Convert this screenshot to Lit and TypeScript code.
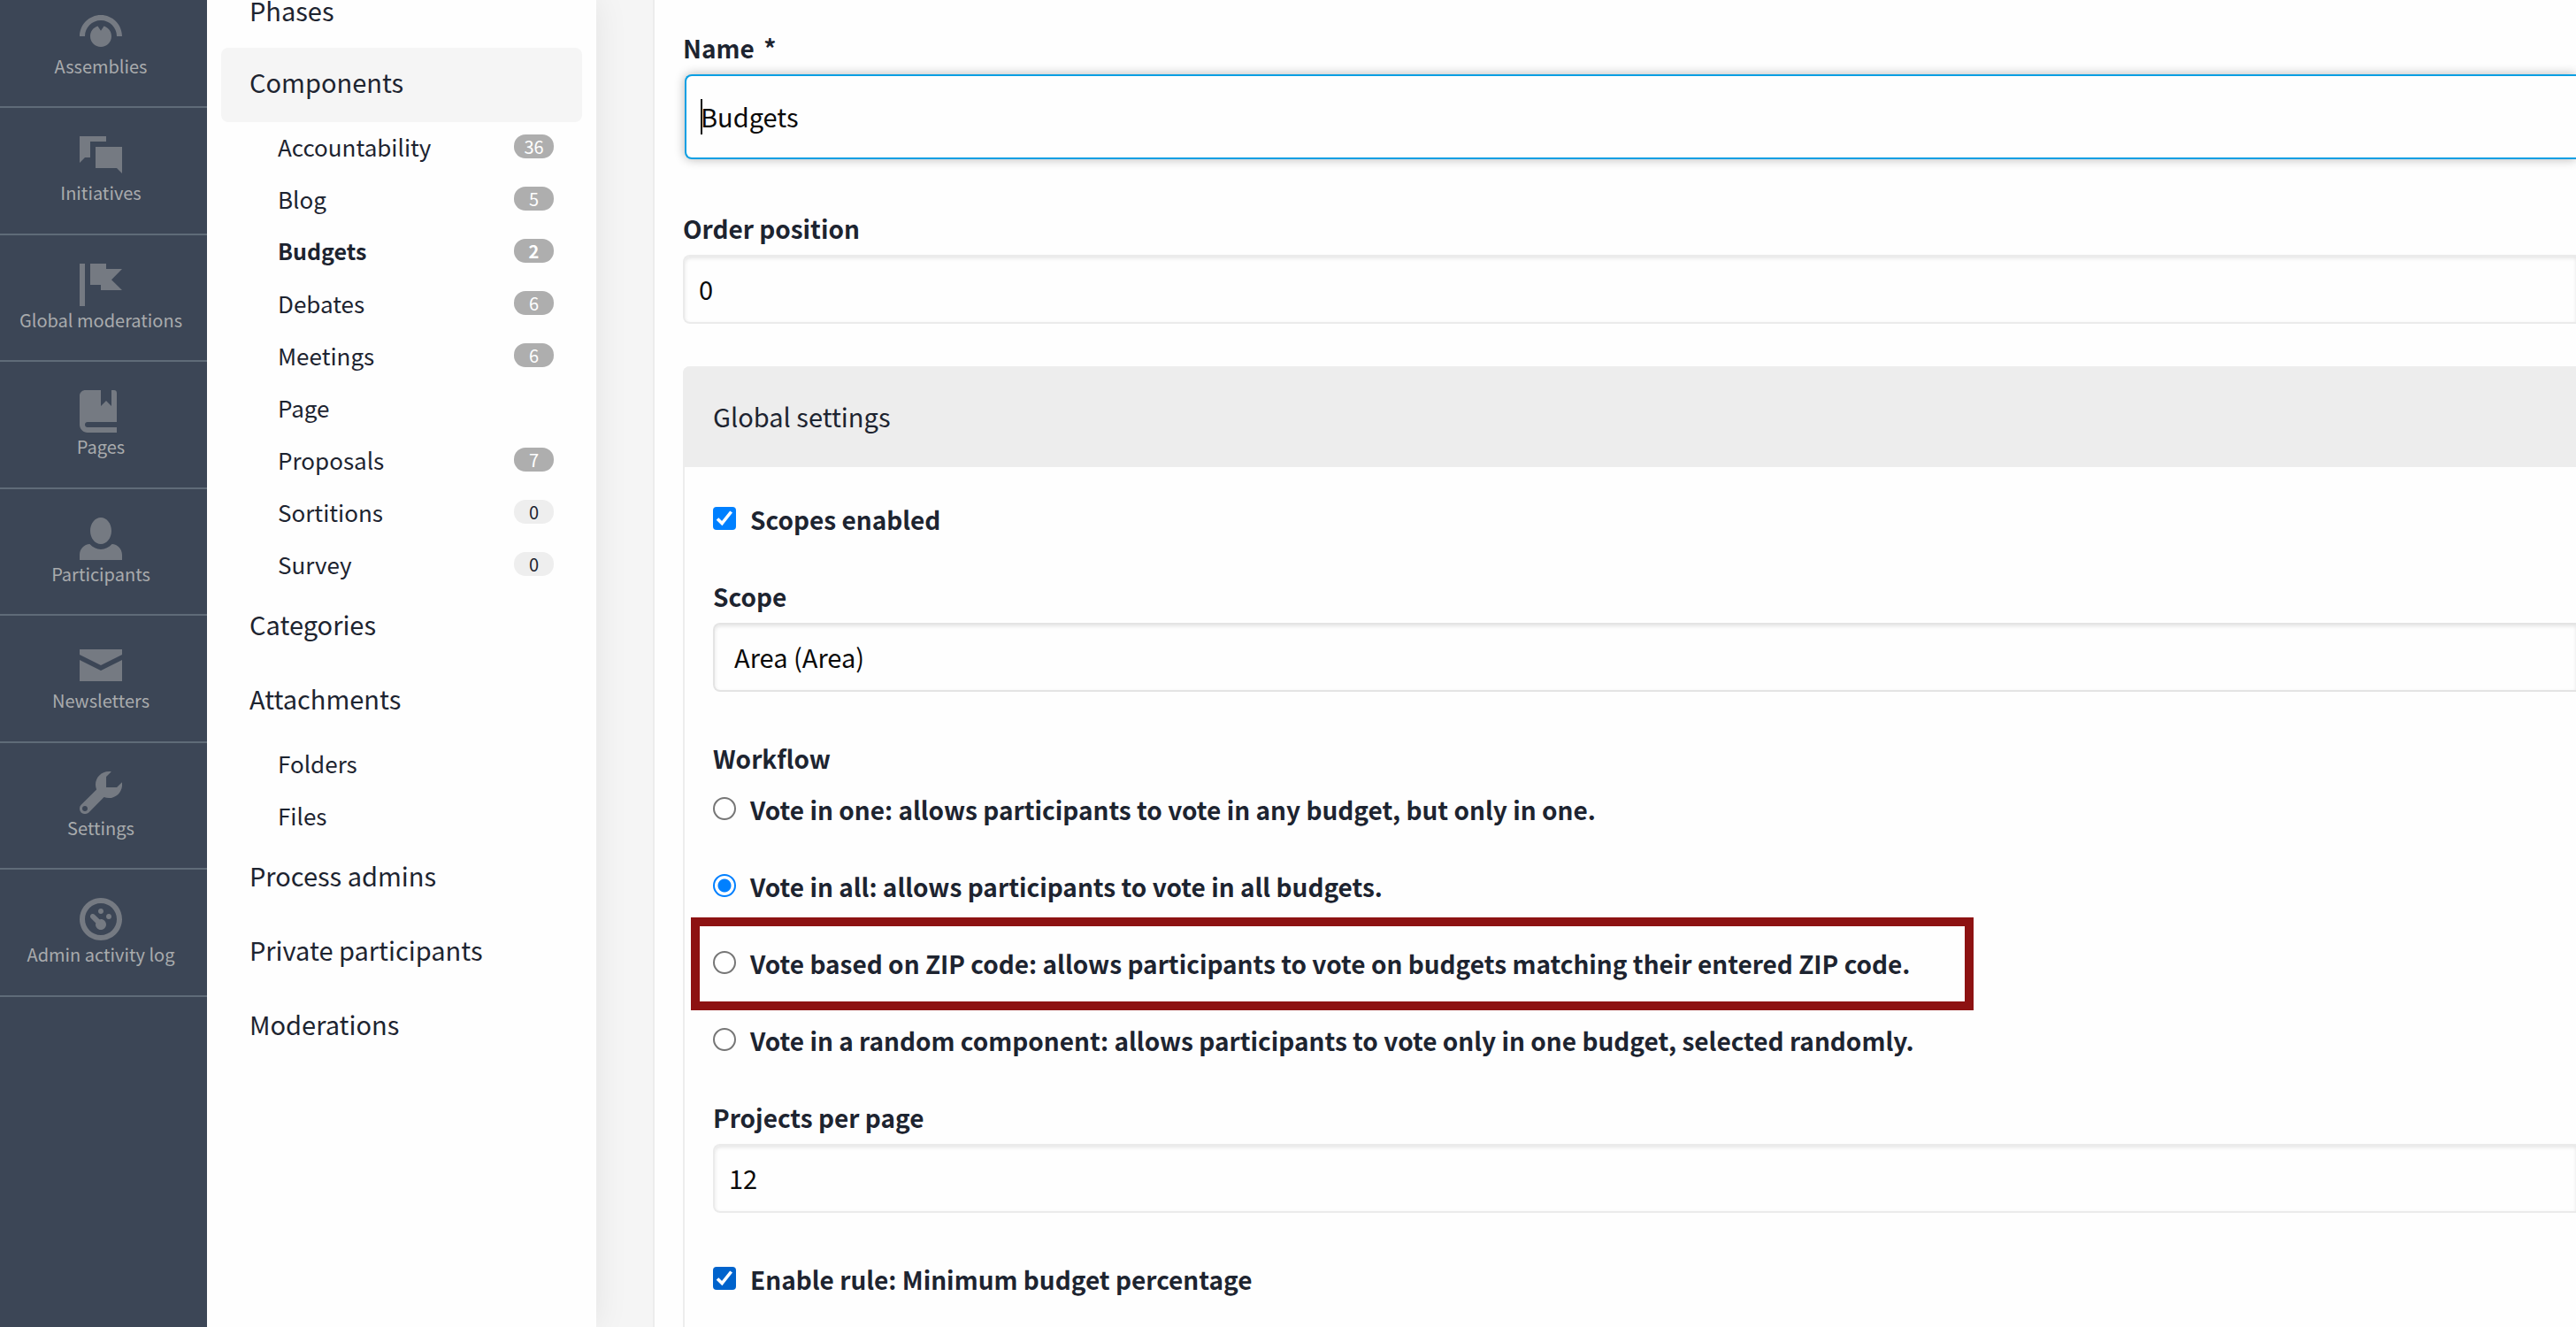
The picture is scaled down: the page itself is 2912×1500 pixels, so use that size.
import { LitElement, html, css, svg, nothing } from "lit";
import { customElement } from "lit/decorators.js";
import { classMap } from "lit/directives/class-map.js";

interface NavEntry {
  label: string;
  path: string;
  shift?: boolean;
}

interface SubItem {
  label: string;
  count?: number;
  current?: boolean;
}

interface MenuItem {
  label: string;
  active?: boolean;
  children?: SubItem[];
}

const NAV: NavEntry[] = [
  {
    label: "Assemblies",
    shift: true,
    path: "M4 0c-2.2 0-4 1.8-4 4h1c0-1.66 1.34-3 3-3s3 1.34 3 3h1c0-2.2-1.8-4-4-4zm-.59 2.09c-.81.25-1.41 1.01-1.41 1.91 0 1.11.9 2 2 2 1.11 0 2-.89 2-2 0-.9-.59-1.65-1.41-1.91l-.59.88-.59-.88z",
  },
  { label: "Initiatives", path: "M0 0v5l1-1h1v-3h3v-1h-5zm3 2v4h4l1 1v-5h-5z" },
  { label: "Global moderations", path: "M0 0v8h1v-8h-1zm2 0v4h2v1h4l-2-1.97 2-2.03h-3v-1h-3z" },
  {
    label: "Pages",
    path: "M1 0c-.07 0-.13.01-.19.03-.39.08-.7.39-.78.78-.03.06-.03.12-.03.19v5.5c0 .83.67 1.5 1.5 1.5h5.5v-1h-5.5c-.28 0-.5-.22-.5-.5s.22-.5.5-.5h5.5v-5.5c0-.28-.22-.5-.5-.5h-.5v3l-1-1-1 1v-3h-3z",
  },
  {
    label: "Participants",
    path: "M4 0c-1.1 0-2 1.12-2 2.5s.9 2.5 2 2.5 2-1.12 2-2.5-.9-2.5-2-2.5zm-2.09 5c-1.06.05-1.91.92-1.91 2v1h8v-1c0-1.08-.84-1.95-1.91-2-.54.61-1.28 1-2.09 1-.81 0-1.55-.39-2.09-1z",
  },
  { label: "Newsletters", shift: true, path: "M0 0v1l4 2 4-2v-1h-8zm0 2v4h8v-4l-4 2-4-2z" },
  {
    label: "Settings",
    path: "M5.5 0c-1.38 0-2.5 1.12-2.5 2.5 0 .32.08.62.19.91l-2.91 2.88c-.39.39-.39 1.05 0 1.44.2.2.46.28.72.28.26 0 .52-.09.72-.28l2.88-2.91c.28.11.58.19.91.19 1.38 0 2.5-1.12 2.5-2.5 0-.16 0-.32-.03-.47l-.97.97h-2v-2l.97-.97c-.15-.03-.31-.03-.47-.03zm-4.5 6.5c.28 0 .5.22.5.5s-.22.5-.5.5-.5-.22-.5-.5.22-.5.5-.5z",
  },
  {
    label: "Admin activity log",
    path: "M4 0c-2.2 0-4 1.8-4 4s1.8 4 4 4 4-1.8 4-4-1.8-4-4-4zm0 1c1.66 0 3 1.34 3 3s-1.34 3-3 3-3-1.34-3-3 1.34-3 3-3zm0 1c-.28 0-.5.22-.5.5s.22.5.5.5.5-.22.5-.5-.22-.5-.5-.5zm-1.66 1a.5.5 0 0 0-.19.84l.91.91c-.02.08-.06.16-.06.25 0 .55.45 1 1 1s1-.45 1-1-.45-1-1-1c-.09 0-.17.04-.25.06l-.91-.91a.5.5 0 0 0-.5-.15zm3.16 0c-.28 0-.5.22-.5.5s.22.5.5.5.5-.22.5-.5-.22-.5-.5-.5z",
  },
];

const MENU: MenuItem[] = [
  { label: "Phases" },
  {
    label: "Components",
    active: true,
    children: [
      { label: "Accountability", count: 36 },
      { label: "Blog", count: 5 },
      { label: "Budgets", count: 2, current: true },
      { label: "Debates", count: 6 },
      { label: "Meetings", count: 6 },
      { label: "Page" },
      { label: "Proposals", count: 7 },
      { label: "Sortitions", count: 0 },
      { label: "Survey", count: 0 },
    ],
  },
  { label: "Categories" },
  { label: "Attachments", children: [{ label: "Folders" }, { label: "Files" }] },
  { label: "Process admins" },
  { label: "Private participants" },
  { label: "Moderations" },
];

const WORKFLOWS = [
  { value: "one", label: "Vote in one: allows participants to vote in any budget, but only in one." },
  { value: "all", label: "Vote in all: allows participants to vote in all budgets." },
  {
    value: "zip_code",
    label: "Vote based on ZIP code: allows participants to vote on budgets matching their entered ZIP code.",
  },
  {
    value: "random",
    label: "Vote in a random component: allows participants to vote only in one budget, selected randomly.",
  },
];

@customElement("admin-nav")
export class AdminNav extends LitElement {
  static styles = css`
    :host {
      display: block;
      background: #3c4656;
      z-index: 1;
    }
    .list {
      margin: 0;
      padding: 0;
      list-style: none;
    }
    .item {
      border-bottom: 2px solid #5f6b78;
    }
    .link {
      display: flex;
      flex-direction: column;
      align-items: center;
      padding: 32px 6px 30px 0;
      color: #a9abad;
      font-size: 20px;
      line-height: 31px;
      text-decoration: none;
      white-space: nowrap;
    }
    .item:nth-child(even) .link {
      padding-bottom: 31px;
    }
    .item:first-child .link {
      padding-top: 11px;
    }
    .icon {
      width: 48px;
      height: 48px;
      fill: #757a82;
    }
  `;

  render() {
    return html`
      <nav aria-label="Administration">
        <ul class="list">
          ${NAV.map(
            (entry) => html`
              <li class="item">
                <a class="link" href="#">
                  <svg class="icon" viewBox="0 0 8 8" aria-hidden="true">
                    ${svg`<path d=${entry.path} transform=${entry.shift ? "translate(0 1)" : nothing} />`}
                  </svg>
                  ${entry.label}
                </a>
              </li>
            `,
          )}
        </ul>
      </nav>
    `;
  }
}

@customElement("process-menu")
export class ProcessMenu extends LitElement {
  static styles = css`
    :host {
      display: block;
      box-sizing: border-box;
      padding: 0 16px;
      background: #fefefe;
      box-shadow: 0 0 36px rgba(0, 0, 0, 0.08);
    }
    .menu,
    .sub {
      margin: 0;
      padding: 0;
      list-style: none;
    }
    .link {
      display: block;
      padding: 0 32px 8px;
      border-radius: 8px;
      color: #1d2430;
      font-size: 29px;
      line-height: 76px;
      text-decoration: none;
    }
    .first {
      padding-bottom: 32px;
      line-height: 22px;
    }
    .active {
      background: #f5f5f5;
    }
    .sub {
      display: flex;
      flex-direction: column;
      gap: 2px;
    }
    .sub-link {
      display: flex;
      align-items: center;
      justify-content: space-between;
      padding: 0 32px 2px 64px;
      color: #1d2430;
      font-size: 26px;
      line-height: 55px;
      text-decoration: none;
    }
    .current {
      font-size: 25px;
      font-weight: 600;
    }
    .badge {
      min-width: 45px;
      border-radius: 13px;
      background: #eee;
      font-size: 20px;
      line-height: 27px;
      text-align: center;
    }
    .filled {
      background: #aeaeae;
      color: #fefefe;
    }
  `;

  private renderSub(item: SubItem) {
    return html`
      <li>
        <a class=${classMap({ "sub-link": true, current: !!item.current })} href="#">
          ${item.label}
          ${item.count === undefined
            ? nothing
            : html`<span class=${classMap({ badge: true, filled: item.count > 0 })}>${item.count}</span>`}
        </a>
      </li>
    `;
  }

  render() {
    return html`
      <nav aria-label="Process">
        <ul class="menu">
          ${MENU.map(
            (item, index) => html`
              <li>
                <a class=${classMap({ link: true, first: index === 0, active: !!item.active })} href="#"
                  >${item.label}</a
                >
                ${item.children
                  ? html`<ul class="sub">${item.children.map((child) => this.renderSub(child))}</ul>`
                  : nothing}
              </li>
            `,
          )}
        </ul>
      </nav>
    `;
  }
}

@customElement("component-form")
export class ComponentForm extends LitElement {
  static styles = css`
    :host {
      display: block;
      box-sizing: border-box;
      min-width: 0;
      overflow: hidden;
      padding: 32px 0 0 32px;
      border-left: 2px solid #ececec;
      background: #fefefe;
      color: #1d2430;
    }
    .form {
      margin: 0;
    }
    .label,
    .option {
      font-size: 28px;
      font-weight: 600;
      line-height: 44px;
    }
    .label {
      display: block;
      margin-bottom: 8px;
    }
    .required {
      margin-left: 4px;
    }
    .control {
      display: block;
      box-sizing: border-box;
      width: 100%;
      height: 78px;
      margin: 0;
      padding: 0 16px 2px;
      border: 2px solid #ebebeb;
      border-right: 0;
      border-radius: 8px 0 0 8px;
      outline: 0;
      background: #fefefe;
      box-shadow: inset 0 2px 4px rgba(10, 10, 10, 0.1);
      color: #0a0a0a;
      font: inherit;
      font-size: 29px;
      appearance: none;
    }
    .select {
      padding: 0 22px 2px;
      border-color: #e4e4e4;
    }
    .focus-wrap {
      position: relative;
      margin-left: 2px;
    }
    .focused {
      height: 96px;
      border-color: #0a9fe3;
      box-shadow: 0 0 12px rgba(10, 10, 10, 0.3);
    }
    .caret {
      position: absolute;
      top: 28px;
      left: 18px;
      width: 2px;
      height: 40px;
      background: #0a0a0a;
    }
    .field {
      margin-bottom: 56px;
    }
    .field-order {
      margin-bottom: 48px;
    }
    .panel {
      border-left: 2px solid #ededed;
      border-radius: 8px 0 0 0;
    }
    .panel-title {
      margin: 0 0 0 -2px;
      padding: 0 34px 2px;
      border-radius: 8px 0 0 0;
      background: #ededed;
      font-size: 29px;
      font-weight: 400;
      line-height: 112px;
    }
    .panel-body {
      display: flex;
      flex-direction: column;
      padding: 37px 0 45px 32px;
    }
    .panel-field {
      margin-bottom: 53px;
    }
    .option {
      display: flex;
      align-items: center;
      gap: 16px;
      position: relative;
      width: fit-content;
      margin-bottom: 43px;
      white-space: nowrap;
    }
    .group {
      min-width: 0;
      margin: 0;
      padding: 0;
      border: 0;
    }
    .legend {
      margin-bottom: 14px;
      padding: 0;
    }
    .marked::after {
      content: "";
      position: absolute;
      inset: -30px -72px -31px -25px;
      border: 10px solid #8d1212;
      pointer-events: none;
    }
    .tick,
    .radio {
      flex: none;
      box-sizing: border-box;
      width: 26px;
      height: 26px;
      margin: 0;
      appearance: none;
    }
    .tick-wrap,
    .radio {
      margin-bottom: 2px;
    }
    .tick-wrap {
      display: grid;
    }
    .tick,
    .tick-mark {
      grid-area: 1 / 1;
    }
    .tick {
      border-radius: 4px;
      background: #0080ff;
    }
    .tick-dark {
      background: #0063cc;
    }
    .tick-mark {
      width: 26px;
      height: 26px;
      pointer-events: none;
    }
    .radio {
      border: 2px solid #767676;
      border-radius: 50%;
      background: #fff;
    }
    .radio:checked {
      border-color: #0080ff;
      background: radial-gradient(circle, #0080ff 7px, #fff 8px);
    }
  `;

  private renderTick(id: string, label: string, dark = false) {
    return html`
      <label class="option" for=${id}>
        <span class="tick-wrap">
          <input class=${classMap({ tick: true, "tick-dark": dark })} type="checkbox" id=${id} checked />
          <svg class="tick-mark" viewBox="0 0 26 26" aria-hidden="true">
            <path d="M5 13.500L10.200 18.500L20.600 5.500" fill="none" stroke="#fff" stroke-width="3.600" />
          </svg>
        </span>
        ${label}
      </label>
    `;
  }

  render() {
    return html`
      <form class="form">
        <div class="field">
          <label class="label" for="name">Name <span class="required">*</span></label>
          <div class="focus-wrap">
            <input class="control focused" id="name" type="text" value="Budgets" required />
            <span class="caret"></span>
          </div>
        </div>
        <div class="field field-order">
          <label class="label" for="order">Order position</label>
          <input class="control" id="order" type="text" inputmode="numeric" value="0" />
        </div>
        <section class="panel">
          <h2 class="panel-title">Global settings</h2>
          <div class="panel-body">
            ${this.renderTick("scopes", "Scopes enabled")}
            <div class="panel-field">
              <label class="label" for="scope">Scope</label>
              <select class="control select" id="scope">
                <option>Area (Area)</option>
              </select>
            </div>
            <fieldset class="group">
              <legend class="label legend">Workflow</legend>
              ${WORKFLOWS.map(
                (flow) => html`
                  <label class=${classMap({ option: true, marked: flow.value === "zip_code" })}>
                    <input
                      class="radio"
                      type="radio"
                      name="workflow"
                      value=${flow.value}
                      ?checked=${flow.value === "all"}
                    />
                    ${flow.label}
                  </label>
                `,
              )}
            </fieldset>
            <div class="panel-field">
              <label class="label" for="per-page">Projects per page</label>
              <input class="control" id="per-page" type="text" inputmode="numeric" value="12" />
            </div>
            ${this.renderTick("minimum", "Enable rule: Minimum budget percentage", true)}
          </div>
        </section>
      </form>
    `;
  }
}

@customElement("app-root")
export class AppRoot extends LitElement {
  static styles = css`
    :host {
      display: grid;
      grid-template-columns: 234px 440px minmax(0, 1fr);
      height: 100vh;
      overflow: hidden;
      background: #f5f5f5;
      font-family: "Noto Sans CJK SC", "Noto Sans", sans-serif;
    }
    .form-area {
      margin-left: 64px;
    }
  `;

  render() {
    return html`
      <admin-nav></admin-nav>
      <process-menu></process-menu>
      <component-form class="form-area"></component-form>
    `;
  }
}
